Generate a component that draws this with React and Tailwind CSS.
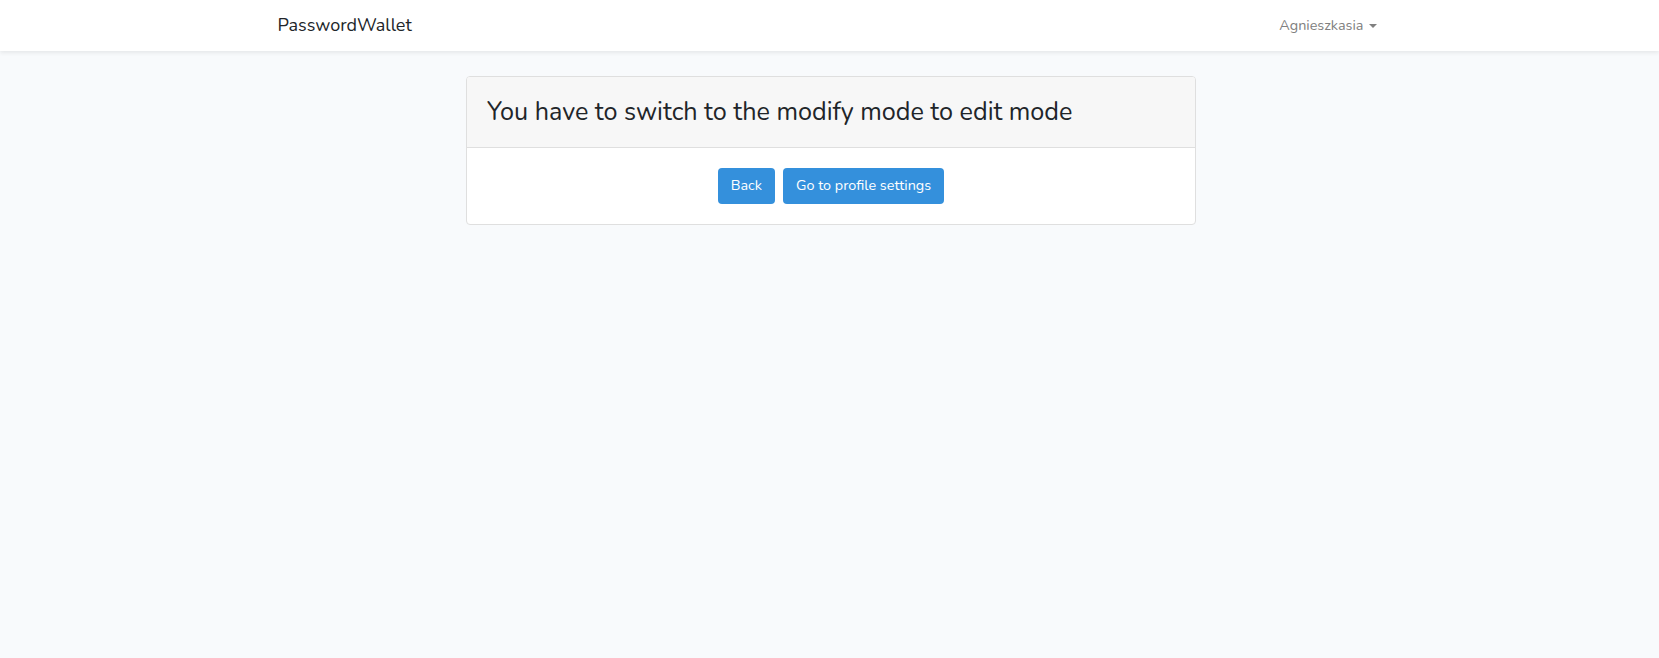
import React from 'react';

const App = () => {
  return (
    <div className="min-h-screen bg-[#f8fafc] text-[#212529] font-['Nunito','Lato','Noto_Sans',sans-serif]">
      {/* Navbar */}
      <nav className="bg-white shadow-[0_2px_4px_rgba(0,0,0,0.075)]">
        <div className="mx-auto w-[1140px] pl-[18px] pr-[15px] h-[51px] flex items-center justify-between">
          <a className="text-[18px] leading-[28.8px] text-[#212529]">PasswordWallet</a>
          <a className="flex items-center px-2 text-[14.4px] text-[#808080]">
            Agnieszkasia
            <span className="ml-[5px] inline-block w-0 h-0 border-x-[4.3px] border-x-transparent border-t-[4.3px] border-t-[#808080] mt-[1px]" />
          </a>
        </div>
      </nav>

      {/* Content */}
      <main className="py-[25px]">
        <div className="mx-auto w-[1140px] pl-[3px] flex justify-center">
          <div className="w-[730px] bg-white border border-[#dfdfdf] rounded-[4px] overflow-hidden">
            <div className="bg-[#f7f7f7] border-b border-[#dfdfdf] px-5 py-5">
              <h3 className="text-[25.2px] leading-[30px]">
                You have to switch to the modify mode to edit mode
              </h3>
            </div>
            <div className="p-5 flex justify-center gap-2">
              <button className="h-9 px-[13px] rounded-[4px] bg-[#3490dc] text-white text-[14.4px]">
                Back
              </button>
              <button className="h-9 px-[13px] rounded-[4px] bg-[#3490dc] text-white text-[14.4px]">
                Go to profile settings
              </button>
            </div>
          </div>
        </div>
      </main>
    </div>
  );
};

export default App;
